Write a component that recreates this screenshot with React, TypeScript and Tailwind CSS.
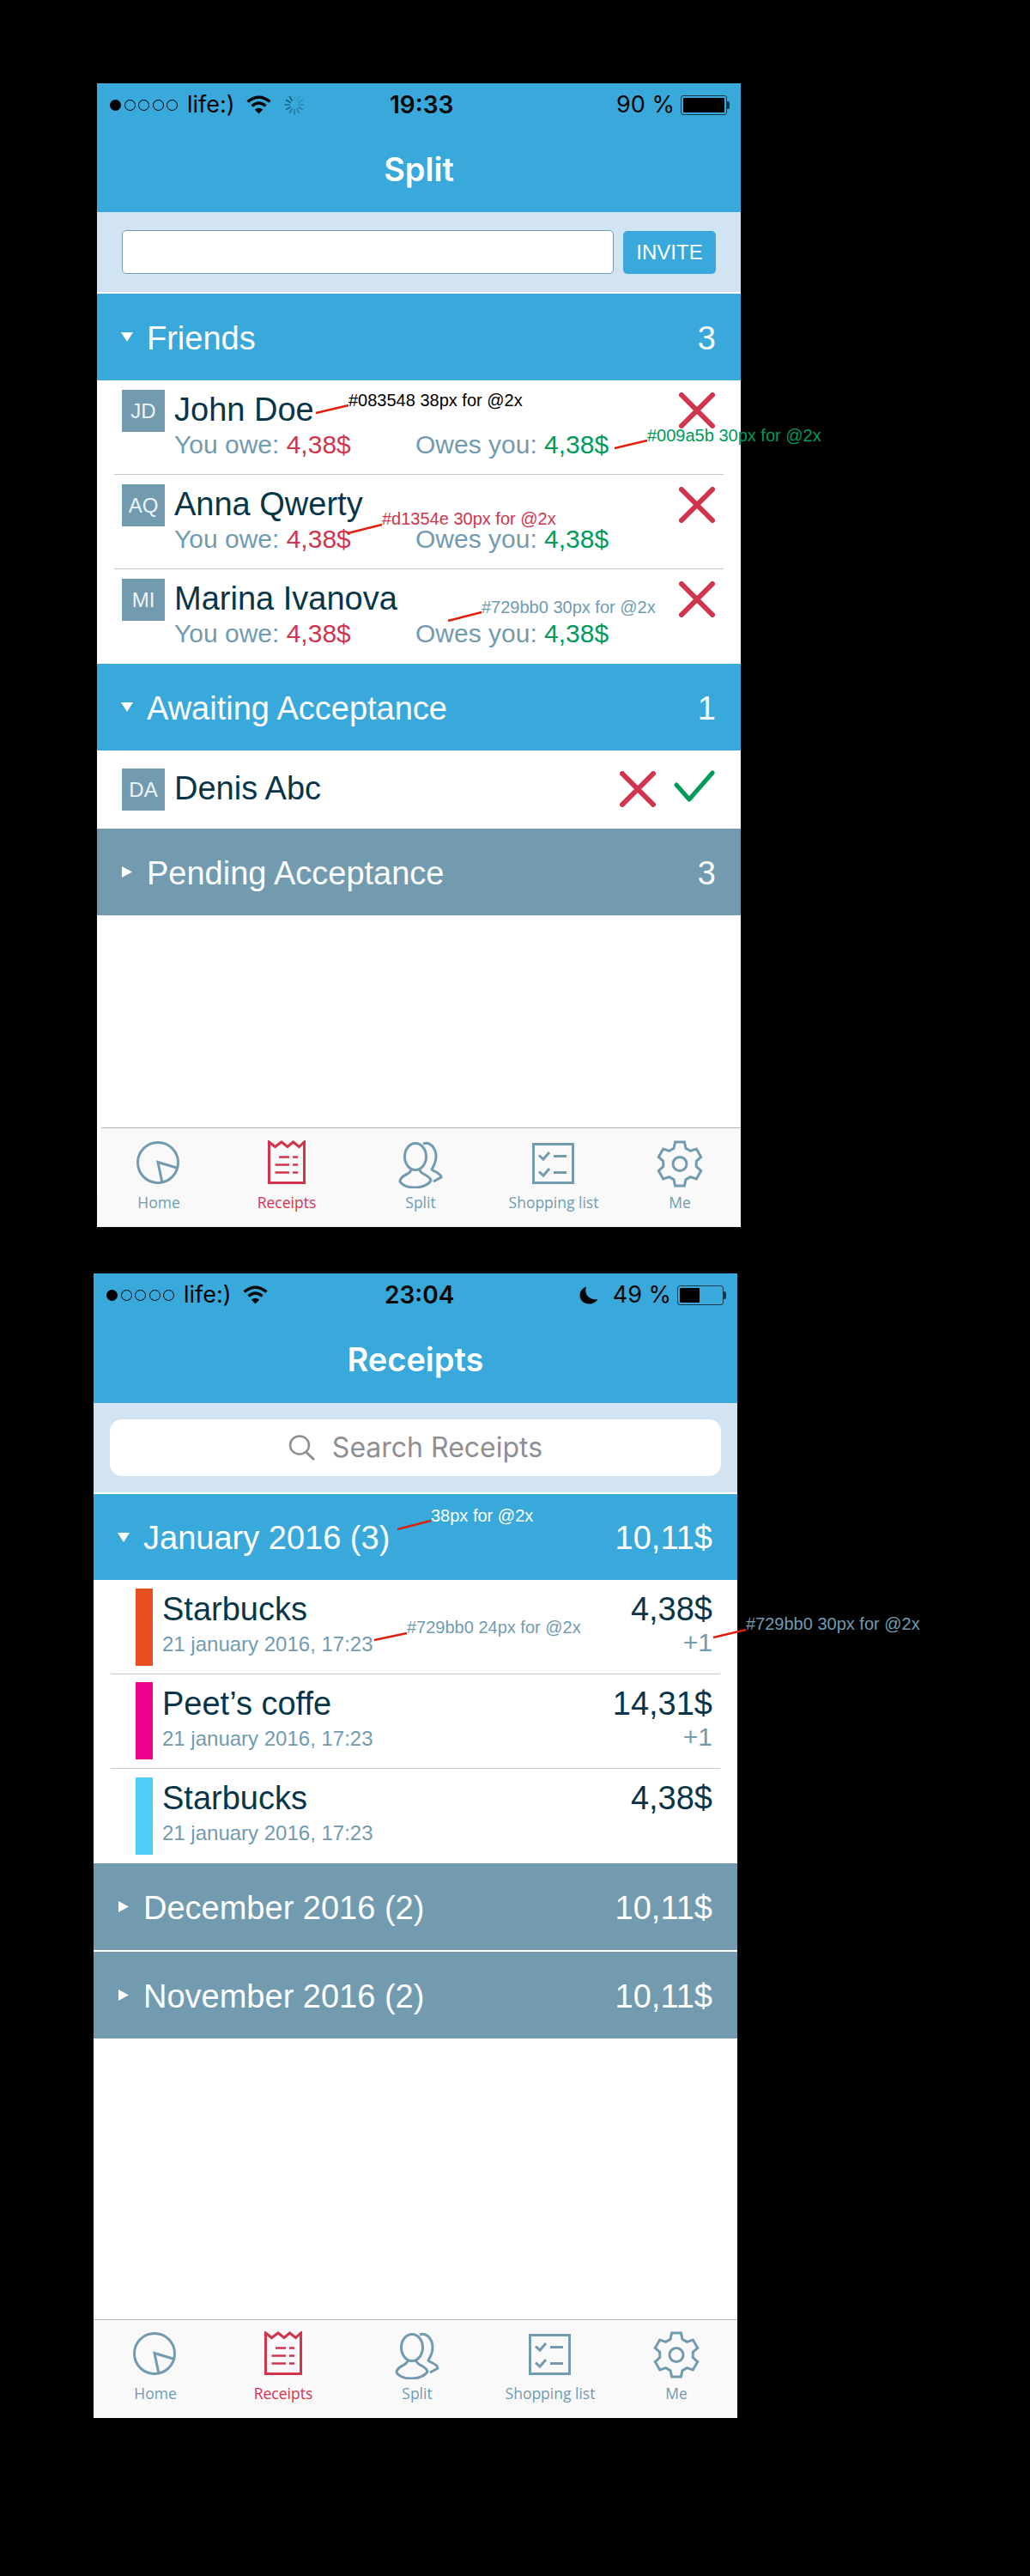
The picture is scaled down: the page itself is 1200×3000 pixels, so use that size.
import React from "react";

const SANS = "font-['Liberation_Sans',Arial,sans-serif]";
const SF = "font-['Inter','Liberation_Sans',sans-serif]";

function gearPath(cx: number, cy: number, ro: number, ri: number, teeth: number) {
  const pts: string[] = [];
  for (let i = 0; i < teeth; i++) {
    const a = -90 + (360 / teeth) * i;
    const list: [number, number][] = [
      [a - 21, ri],
      [a - 12, ro],
      [a + 12, ro],
      [a + 21, ri],
    ];
    for (const [d, r] of list) {
      const t = (d * Math.PI) / 180;
      pts.push(`${(cx + r * Math.cos(t)).toFixed(2)} ${(cy + r * Math.sin(t)).toFixed(2)}`);
    }
  }
  return "M" + pts.join("L") + "Z";
}

function Battery({ level }: { level: "90" | "49" }) {
  return (
    <div className="flex items-center">
      <div className="w-[54px] h-[23px] rounded-[3px] border-[1.5px] border-[#10384f] p-[2px] flex">
        <div className={level === "90" ? "w-full bg-black rounded-[1px]" : "w-[23px] bg-black rounded-[1px]"} />
      </div>
      <div className="w-[3px] h-[9px] bg-[#10384f] rounded-r-[2px]" />
    </div>
  );
}

function Wifi() {
  return (
    <svg width="29" height="22" viewBox="0 0 29 22" className="block">
      <path d="M1.5 7.5Q14.5 -3 27.5 7.5" fill="none" stroke="#050505" strokeWidth="3.4" />
      <path d="M6.5 12.5Q14.5 5.5 22.5 12.5" fill="none" stroke="#050505" strokeWidth="3.4" />
      <path d="M14.5 21.5L9.8 16.5Q14.5 13 19.2 16.5Z" fill="#050505" />
    </svg>
  );
}

function Spinner() {
  const spokes = Array.from({ length: 12 }, (_, i) => i);
  return (
    <svg width="24" height="24" viewBox="-12 -12 24 24" className="block">
      {spokes.map((i) => (
        <line
          key={i}
          x1="0"
          y1="-5"
          x2="0"
          y2="-11.5"
          stroke="#0d4a6b"
          strokeWidth="1.5"
          opacity={0.15 + (i / 12) * 0.8}
          transform={`rotate(${i * 30})`}
        />
      ))}
    </svg>
  );
}

function Moon() {
  return (
    <svg width="22" height="21" viewBox="0 0 22 21" className="block">
      <path d="M8 0.5C5 9 11 16.5 21.5 15C19 19 15 20.5 11.5 20.5C4.5 20.5 0.5 15.5 0.5 10.5C0.5 6 3.5 2 8 0.5Z" fill="#050505" />
    </svg>
  );
}

function StatusBar({ second }: { second?: boolean }) {
  return (
    <div className={`h-[50px] flex items-center pl-[15px] pr-[13px] text-[#050505] ${SF}`}>
      <div className={second ? "w-[324px] flex items-center" : "w-[326px] flex items-center"}>
        <div className="flex gap-[3.5px] items-center">
          <div className="w-[13px] h-[13px] rounded-full bg-black" />
          {[0, 1, 2, 3].map((i) => (
            <div key={i} className="w-[13px] h-[13px] rounded-full border border-black" />
          ))}
        </div>
        <span className="ml-[11px] text-[27px] leading-[30px]">life:)</span>
        <span className="ml-[13px]"><Wifi /></span>
        {!second && <span className="ml-[15px]"><Spinner /></span>}
      </div>
      <span className="text-[28px] leading-[30px] font-semibold">{second ? "23:04" : "19:33"}</span>
      <div className="ml-auto flex items-center">
        {second && <span className="mr-[17px]"><Moon /></span>}
        <span className="text-[27px] leading-[30px] mr-[7px]">{second ? "49 %" : "90 %"}</span>
        <Battery level={second ? "49" : "90"} />
      </div>
    </div>
  );
}

function TriDown() {
  return (
    <svg width="14" height="11" viewBox="0 0 14 11" className="block shrink-0">
      <polygon points="0,0 14,0 7,11" fill="#fff" />
    </svg>
  );
}
function TriRight() {
  return (
    <svg width="14" height="13" viewBox="0 0 14 13" className="block shrink-0">
      <polygon points="1,0 13,6.5 1,13" fill="#fff" />
    </svg>
  );
}

function SectionHead({
  title,
  right,
  open,
  short,
}: {
  title: string;
  right: string;
  open?: boolean;
  short?: boolean;
}) {
  return (
    <div
      className={`${short ? "h-[100px]" : "h-[101px]"} ${open ? "bg-[#39a8da]" : "bg-[#729bb0]"} pl-[28px] pr-[29px] flex items-center text-white text-[38px] leading-[40px] ${SANS}`}
    >
      {open ? <TriDown /> : <TriRight />}
      <span className="ml-[16px] pt-[2px]">{title}</span>
      <span className="ml-auto pt-[2px]">{right}</span>
    </div>
  );
}

function CrossIcon() {
  return (
    <svg width="42" height="42" viewBox="0 0 42 42" className="block shrink-0">
      <path d="M3 3L39 39M39 3L3 39" stroke="#d1354e" strokeWidth="6" strokeLinecap="round" fill="none" />
    </svg>
  );
}

function CheckIcon() {
  return (
    <svg width="48" height="38" viewBox="0 0 48 38" className="block shrink-0">
      <path d="M3 17L18 34L45 3" stroke="#009a5b" strokeWidth="5" strokeLinecap="round" strokeLinejoin="round" fill="none" />
    </svg>
  );
}

function Avatar({ text }: { text: string }) {
  return (
    <div className="w-[50px] h-[49px] bg-[#729bb0] text-[#eef3f6] text-[24px] leading-[49px] text-center shrink-0">{text}</div>
  );
}

function FriendRow({ initials, name, last }: { initials: string; name: string; last?: boolean }) {
  return (
    <div className={`h-[110px] mx-[20px] pl-[9px] pr-[10px] flex ${last ? "" : "border-b border-[#c8c8c8]"} ${SANS}`}>
      <div className="mt-[11px]"><Avatar text={initials} /></div>
      <div className="ml-[11px] pt-[14px]">
        <div className="text-[38px] leading-[40px] text-[#083548]">{name}</div>
        <div className="mt-[4px] flex text-[30px] leading-[34px] text-[#729bb0]">
          <div className="w-[281px]">
            You owe: <span className="text-[#d1354e]">4,38$</span>
          </div>
          <div>
            Owes you: <span className="text-[#009a5b]">4,38$</span>
          </div>
        </div>
      </div>
      <div className="ml-auto mt-[14px]"><CrossIcon /></div>
    </div>
  );
}

function ReceiptRow({
  bar,
  name,
  price,
  extra,
  last,
}: {
  bar: string;
  name: string;
  price: string;
  extra?: boolean;
  last?: boolean;
}) {
  return (
    <div className={`h-[110px] mx-[20px] pl-[29px] pr-[9px] flex ${last ? "" : "border-b border-[#c8c8c8]"} ${SANS}`}>
      <div className={`w-[20px] h-[90px] ${bar}`} />
      <div className="ml-[11px] pt-[14px]">
        <div className="text-[38px] leading-[40px] text-[#083548]">{name}</div>
        <div className="mt-[7px] text-[24px] leading-[28px] text-[#729bb0]">21 january 2016, 17:23</div>
      </div>
      <div className="ml-auto pt-[14px] text-right">
        <div className="text-[38px] leading-[40px] text-[#083548]">{price}</div>
        {extra && <div className="mt-[2px] text-[30px] leading-[34px] text-[#729bb0]">+1</div>}
      </div>
    </div>
  );
}

const ICON = "#729bb0";
const RED = "#d1354e";

function HomeIcon() {
  return (
    <svg width="54" height="56" viewBox="0 0 54 56" fill="none" stroke={ICON} strokeWidth="3" className="block">
      <circle cx="26" cy="26" r="23.5" />
      <path d="M49.5 32.5L26 25.5L31 49.5" strokeLinejoin="miter" />
    </svg>
  );
}
function ReceiptIcon() {
  return (
    <svg width="54" height="56" viewBox="0 0 54 56" fill="none" stroke={RED} strokeWidth="3" className="block">
      <path d="M6.5 2L13.5 7.5L21 2L28 7.5L34.5 2L41.5 7.5L47.5 2V49.5H6.5Z" />
      <path d="M18 19.5H30M34 19.5H40M13.5 28.5H30M34 28.5H40M13.5 37.5H30M34 37.5H40" strokeWidth="2.6" />
    </svg>
  );
}
function SplitIcon() {
  return (
    <svg width="54" height="56" viewBox="0 0 54 56" fill="none" stroke={ICON} strokeWidth="3" className="block">
      <g transform="translate(0 1)">
        <ellipse cx="21" cy="18" rx="12.5" ry="15.5" />
        <path d="M16 33C16 39 3 39 3 47C6 52 14 54 21 54C28 54 36 51 39 46C38 39 26 39 26 33" />
        <path d="M30 3C38 0 45 8 45 18C45 26 41 30 40 33C43 36 51 37 51 42L42 47" />
      </g>
    </svg>
  );
}
function ListIcon() {
  return (
    <svg width="54" height="56" viewBox="0 0 54 56" fill="none" stroke={ICON} strokeWidth="3" className="block">
      <rect x="3.5" y="4.5" width="46" height="45" />
      <path d="M10 17.5L15 22L22 14M27 18.5H42M10 36.5L15 41L22 33M27 37.5H42" />
    </svg>
  );
}
function GearIcon() {
  return (
    <svg width="54" height="56" viewBox="0 0 54 56" fill="none" stroke={ICON} strokeWidth="3" className="block">
      <path d={gearPath(27, 27.5, 26, 19.5, 6)} strokeLinejoin="miter" />
      <circle cx="27" cy="27.5" r="8" />
    </svg>
  );
}

function TabBar({ second }: { second?: boolean }) {
  const tabs = [
    { label: "Home", icon: <HomeIcon /> },
    { label: "Receipts", icon: <ReceiptIcon />, active: true },
    { label: "Split", icon: <SplitIcon /> },
    { label: "Shopping list", icon: <ListIcon /> },
    { label: "Me", icon: <GearIcon /> },
  ];
  return (
    <div className={`relative bg-[#f9f9f9] border-t border-[#b2b2b2] grid grid-cols-[144px_154px_158px_152px_142px] ${second ? "h-[115px]" : "h-[116px]"}`}>
      {!second && <div className="absolute left-0 -top-px w-[5px] h-[80px] bg-white" />}
      {tabs.map((t) => (
        <div key={t.label} className="flex flex-col items-center">
          <div className={second ? "h-[75px] pt-[13px]" : "h-[76px] pt-[14px]"}>{t.icon}</div>
          <div className={`text-[17.5px] leading-[20px] font-['Open_Sans',sans-serif] ${t.active ? "text-[#d1354e]" : "text-[#729bb0]"}`}>{t.label}</div>
        </div>
      ))}
    </div>
  );
}

function Note({ className, children }: { className: string; children: React.ReactNode }) {
  return <span className={`absolute whitespace-nowrap text-[20px] leading-[20px] ${SANS} ${className}`}>{children}</span>;
}

function Lines({ lines }: { lines: [number, number, number, number][] }) {
  return (
    <svg className="absolute left-0 top-0 w-[750px] h-[1000px] overflow-visible pointer-events-none">
      {lines.map((l, i) => (
        <line key={i} x1={l[0]} y1={l[1]} x2={l[2]} y2={l[3]} stroke="#e0200f" strokeWidth="2.5" />
      ))}
    </svg>
  );
}

export default function App() {
  return (
    <div className="w-[1200px] h-[3000px] bg-black overflow-hidden pt-[97px]">
      {/* Split screen */}
      <div className="relative ml-[113px] w-[750px] h-[1332px] bg-white flex flex-col">
        <div className="h-[150px] bg-[#39a8da]">
          <StatusBar />
          <div className={`h-[100px] flex items-center justify-center text-white text-[38px] font-semibold ${SF}`}>Split</div>
        </div>
        <div className="h-[93px] bg-[#d2e4f2] pl-[29px] flex items-center gap-[11px]">
          <div className="w-[573px] h-[51px] bg-white border border-[#729bb0] rounded-[5px]" />
          <div className={`w-[108px] h-[50px] bg-[#39a8da] rounded-[5px] text-white text-[24px] leading-[50px] text-center ${SANS}`}>INVITE</div>
        </div>
        <div className="h-[2px] bg-white" />
        <SectionHead title="Friends" right="3" open />
        <FriendRow initials="JD" name="John Doe" />
        <FriendRow initials="AQ" name="Anna Qwerty" />
        <FriendRow initials="MI" name="Marina Ivanova" last />
        <SectionHead title="Awaiting Acceptance" right="1" open />
        <div className={`h-[91px] pl-[29px] pr-[28px] flex ${SANS}`}>
          <div className="mt-[21px]"><Avatar text="DA" /></div>
          <div className="ml-[11px] mt-[24px] text-[38px] leading-[40px] text-[#083548]">Denis Abc</div>
          <div className="ml-auto mt-[24px]"><CrossIcon /></div>
          <div className="ml-[21px] mt-[23px] mr-[2px]"><CheckIcon /></div>
        </div>
        <SectionHead title="Pending Acceptance" right="3" />
        <div className="flex-1" />
        <TabBar />

        <Lines lines={[[255, 384, 293, 375], [603, 425, 641, 416], [292, 524, 332, 514], [409, 626, 448, 616]]} />
        <Note className="left-[293px] top-[359px] text-black">#083548 38px for @2x</Note>
        <Note className="left-[641px] top-[400px] text-[#009a5b]">#009a5b 30px for @2x</Note>
        <Note className="left-[332px] top-[497px] text-[#d1354e]">#d1354e 30px for @2x</Note>
        <Note className="left-[448px] top-[600px] text-[#729bb0]">#729bb0 30px for @2x</Note>
      </div>

      {/* Receipts screen */}
      <div className="relative ml-[109px] mt-[54px] w-[750px] h-[1333px] bg-white flex flex-col">
        <div className="h-[151px] bg-[#39a8da]">
          <StatusBar second />
          <div className={`h-[101px] flex items-center justify-center text-white text-[38px] font-semibold ${SF}`}>Receipts</div>
        </div>
        <div className="h-[104px] bg-[#d2e4f2] px-[19px] flex items-center">
          <div className={`w-[712px] h-[66px] bg-white rounded-[14px] flex items-center justify-center gap-[19px] text-[#8e8e93] text-[32px] ${SF}`}>
            <svg width="32" height="30" viewBox="0 0 32 30" fill="none" stroke="#8e8e93" strokeWidth="2.5" className="block">
              <ellipse cx="13" cy="12" rx="11" ry="10.5" />
              <path d="M20.5 20L30 29" strokeWidth="3" />
            </svg>
            <span>Search Receipts</span>
          </div>
        </div>
        <div className="h-[2px] bg-white" />
        <SectionHead title="January 2016 (3)" right="10,11$" open short />
        <ReceiptRow bar="mt-[10px] bg-[#e8501f]" name="Starbucks" price="4,38$" extra />
        <ReceiptRow bar="mt-[9px] bg-[#ec008c]" name="Peet’s coffe" price="14,31$" extra />
        <ReceiptRow bar="mt-[10px] bg-[#4fcff8]" name="Starbucks" price="4,38$" last />
        <SectionHead title="December 2016 (2)" right="10,11$" />
        <div className="h-[2px] bg-white" />
        <SectionHead title="November 2016 (2)" right="10,11$" />
        <div className="flex-1" />
        <TabBar second />

        <Lines lines={[[354, 298, 393, 288], [327, 427, 365, 419], [722, 424, 760, 415]]} />
        <Note className="left-[393px] top-[272px] text-white">38px for @2x</Note>
        <Note className="left-[365px] top-[402px] text-[#729bb0]">#729bb0 24px for @2x</Note>
        <Note className="left-[760px] top-[398px] text-[#729bb0]">#729bb0 30px for @2x</Note>
      </div>
    </div>
  );
}
